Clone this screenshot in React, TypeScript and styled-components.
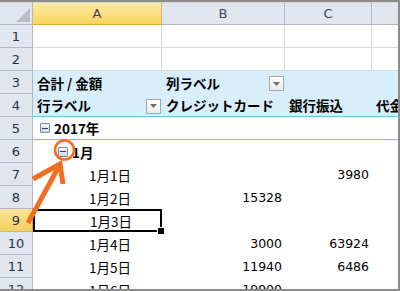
import styled, { createGlobalStyle, css } from "styled-components"

const GlobalStyle = createGlobalStyle`
  body {
    margin: 0;
    background: #fff;
    font-family: "Noto Sans CJK JP", "DejaVu Sans", sans-serif;
  }
`

type Row = {
  num: number
  a?: React.ReactNode
  b?: string
  c?: string
  kind?: 'blank' | 'head' | 'body' | 'year'
}

const Toggle = () => <ToggleBox><ToggleBar /></ToggleBox>

const DropButton = () => (
  <Drop>
    <svg width="7" height="4" viewBox="0 0 7 4"><path d="M0 0h7L3.5 4z" fill="#6d6d6d" /></svg>
  </Drop>
)

const rows: Row[] = [
  { num: 1, kind: 'blank' },
  { num: 2, kind: 'blank' },
  { num: 3, kind: 'head' },
  { num: 4, kind: 'head' },
  { num: 5, kind: 'year' },
  { num: 6, kind: 'body' },
  { num: 7, kind: 'body', a: '1月1日', c: '3980' },
  { num: 8, kind: 'body', a: '1月2日', b: '15328' },
  { num: 9, kind: 'body', a: '1月3日' },
  { num: 10, kind: 'body', a: '1月4日', b: '3000', c: '63924' },
  { num: 11, kind: 'body', a: '1月5日', b: '11940', c: '6486' },
  { num: 12, kind: 'body', a: '1月6日', b: '19900' },
]

const App = () => {
  const renderCells = (row: Row) => {
    if (row.kind === 'blank') {
      return (
        <>
          <GridCell />
          <GridCell />
          <GridCell />
          <GridCell />
        </>
      )
    }
    if (row.num === 3) {
      return (
        <>
          <PivotCell><Bold>合計 / 金額</Bold></PivotCell>
          <PivotCell><Bold>列ラベル</Bold><DropButton /></PivotCell>
          <PivotCell />
          <PivotCell />
        </>
      )
    }
    if (row.num === 4) {
      return (
        <>
          <PivotCell $line><Bold>行ラベル</Bold><DropButton /></PivotCell>
          <PivotCell $line><Bold>クレジットカード</Bold></PivotCell>
          <PivotCell $line><Bold>銀行振込</Bold></PivotCell>
          <PivotCell $line><Bold>代金引換</Bold></PivotCell>
        </>
      )
    }
    if (row.num === 5) {
      return (
        <>
          <BodyCell $line $indent={7}><Toggle /><Bold>2017年</Bold></BodyCell>
          <BodyCell $line />
          <BodyCell $line />
          <BodyCell $line />
        </>
      )
    }
    if (row.num === 6) {
      return (
        <>
          <BodyCell $indent={25}><Toggle /><Bold>1月</Bold></BodyCell>
          <BodyCell />
          <BodyCell />
          <BodyCell />
        </>
      )
    }
    return (
      <>
        <BodyCell $indent={56} $selected={row.num === 9}>
          {row.a}
          {row.num === 9 && <FillHandle />}
        </BodyCell>
        <NumCell>{row.b}</NumCell>
        <NumCell>{row.c}</NumCell>
        <BodyCell />
      </>
    )
  }

  return (
    <>
      <GlobalStyle />
      <Frame>
        <Sheet>
          <Corner>
            <svg width="14" height="14" viewBox="0 0 14 14"><path d="M14 0v14H0z" fill="#b9bcc2" /></svg>
          </Corner>
          <ColHead $active>A</ColHead>
          <ColHead>B</ColHead>
          <ColHead>C</ColHead>
          <ColHead $last />
          {rows.map(row => (
            <RowGroup key={row.num}>
              <RowHead $active={row.num === 9}>{row.num}</RowHead>
              {renderCells(row)}
            </RowGroup>
          ))}
        </Sheet>
        <Overlay width="400" height="291" viewBox="0 0 400 291">
          <circle cx="64.5" cy="150" r="9.5" fill="none" stroke="#f26f22" strokeWidth="2.6" />
          <g stroke="#f26f22" strokeWidth="5" strokeLinecap="butt" fill="none">
            <line x1="28" y1="223" x2="58" y2="168" />
            <polyline points="33,179 60,164 63,184" strokeLinejoin="miter" />
          </g>
        </Overlay>
      </Frame>
    </>
  )
}

export default App


/* styles */
const Frame = styled.div`
  position: relative;
  width: 400px;
  height: 291px;
  box-sizing: border-box;
  border-top: 2px solid #8c8c8c;
  border-right: 2px solid #8c8c8c;
  border-bottom: 2px solid #8c8c8c;
  overflow: hidden;
  background: #fff;
`

const Sheet = styled.div`
  display: grid;
  grid-template-columns: 33px 129px 123px 87px 60px;
  grid-template-rows: 23px;
  grid-auto-rows: 23px;
  font-size: 13.5px;
  color: #000;
`

const RowGroup = styled.div`
  display: contents;
`

const headBg = css`
  background: #e1e5ee;
  border-right: 1px solid #b2b7c1;
  border-bottom: 1px solid #b2b7c1;
  box-sizing: border-box;
`

const Corner = styled.div`
  ${headBg};
  border-top: 1px solid #d6d9df;
  display: flex;
  align-items: flex-end;
  justify-content: flex-end;
  padding: 0 2px 2px 0;
`

const ColHead = styled.div<{ $active?: boolean; $last?: boolean }>`
  ${headBg};
  border-top: 1px solid #d6d9df;
  display: flex;
  align-items: center;
  justify-content: center;
  font-family: "DejaVu Sans", sans-serif;
  font-size: 13px;
  color: #3f4656;
  ${p => p.$active && css`
    background: linear-gradient(#fdeba6, #f9d45e);
    border-bottom-color: #e3a43c;
    border-right-color: #d7b06a;
  `}
  ${p => p.$last && css`border-right: none;`}
`

const RowHead = styled.div<{ $active?: boolean }>`
  ${headBg};
  display: flex;
  align-items: center;
  justify-content: center;
  font-family: "DejaVu Sans", sans-serif;
  font-size: 13px;
  color: #26324a;
  ${p => p.$active && css`
    background: linear-gradient(#fbe39a, #f6ce60);
    border-right-color: #e3a43c;
  `}
`

const cellBase = css`
  position: relative;
  box-sizing: border-box;
  display: flex;
  align-items: center;
  white-space: nowrap;
  min-width: 0;
`

const GridCell = styled.div`
  ${cellBase};
  border-right: 1px solid #d8d8d8;
  border-bottom: 1px solid #d8d8d8;
`

const PivotCell = styled.div<{ $line?: boolean }>`
  ${cellBase};
  background: #d8eefb;
  padding: 0 1px 0 4px;
  overflow: visible;
  ${p => p.$line && css`border-bottom: 1px solid #6fc3ec;`}
`

const BodyCell = styled.div<{ $line?: boolean; $indent?: number; $selected?: boolean }>`
  ${cellBase};
  padding-left: ${p => p.$indent ?? 4}px;
  ${p => p.$line && css`border-bottom: 1px solid #6fc3ec;`}
  ${p => p.$selected && css`
    box-shadow: inset 0 0 0 2px #000;
    padding-left: ${(p.$indent ?? 4) + 1}px;
  `}
`

const NumCell = styled.div`
  ${cellBase};
  justify-content: flex-end;
  padding-right: 3px;
  font-family: "DejaVu Sans", sans-serif;
  font-size: 12.5px;
`

const Bold = styled.span`
  font-weight: bold;
  flex: 1;
`

const Drop = styled.span`
  flex: none;
  width: 15px;
  height: 15px;
  box-sizing: border-box;
  border: 1px solid #a5a5a5;
  background: linear-gradient(#ffffff, #e9e9e9);
  display: flex;
  align-items: center;
  justify-content: center;
  margin-top: 2px;
`

const ToggleBox = styled.span`
  flex: none;
  width: 10px;
  height: 10px;
  box-sizing: border-box;
  border: 1px solid #7d8ba3;
  border-radius: 1px;
  background: linear-gradient(#f4f6fa, #cdd5e2);
  display: flex;
  align-items: center;
  justify-content: center;
  margin-right: 4px;
`

const ToggleBar = styled.span`
  width: 6px;
  height: 1px;
  background: #34425e;
`

const FillHandle = styled.span`
  position: absolute;
  right: -3px;
  bottom: -3px;
  width: 6px;
  height: 6px;
  background: #000;
  border: 1px solid #fff;
`

const Overlay = styled.svg`
  position: absolute;
  left: 0;
  top: -2px;
  pointer-events: none;
`
